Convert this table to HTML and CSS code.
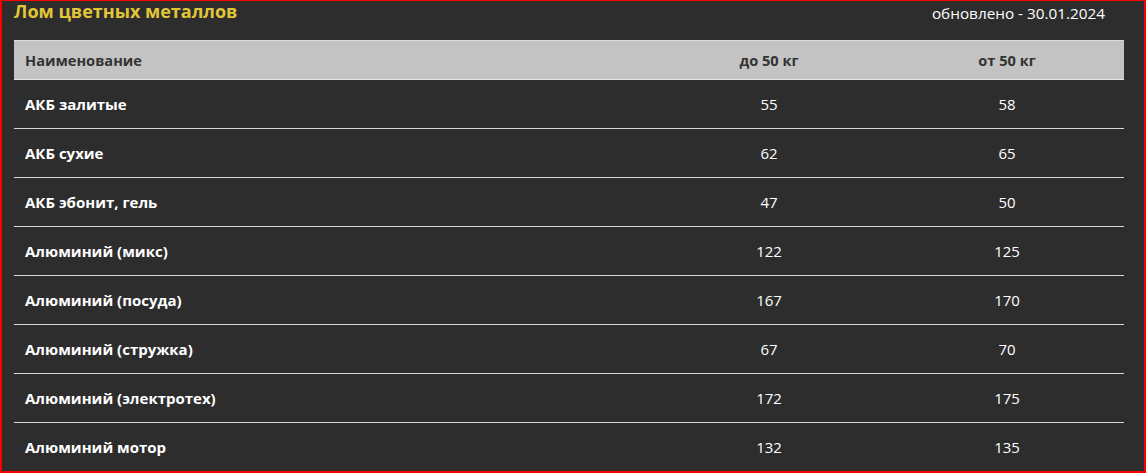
FILE: index.html
```html
<!DOCTYPE html>
<html lang="ru">
<head>
<meta charset="utf-8">
<title>Лом цветных металлов</title>
<link rel="stylesheet" href="styles.css">
</head>
<body>
<div class="frame">
  <div class="top">
    <h1 class="title">Лом цветных металлов</h1>
    <div class="updated">обновлено - 30.01.2024</div>
  </div>
  <table class="prices">
    <colgroup>
      <col class="c-name"><col class="c-a"><col class="c-b">
    </colgroup>
    <thead>
      <tr><th class="name">Наименование</th><th>до 50 кг</th><th>от 50 кг</th></tr>
    </thead>
    <tbody>
      <tr><td class="name">АКБ залитые</td><td>55</td><td>58</td></tr>
      <tr><td class="name">АКБ сухие</td><td>62</td><td>65</td></tr>
      <tr><td class="name">АКБ эбонит, гель</td><td>47</td><td>50</td></tr>
      <tr><td class="name">Алюминий (микс)</td><td>122</td><td>125</td></tr>
      <tr><td class="name">Алюминий (посуда)</td><td>167</td><td>170</td></tr>
      <tr><td class="name">Алюминий (стружка)</td><td>67</td><td>70</td></tr>
      <tr><td class="name">Алюминий (электротех)</td><td>172</td><td>175</td></tr>
      <tr><td class="name">Алюминий мотор</td><td>132</td><td>135</td></tr>
    </tbody>
  </table>
</div>
</body>
</html>
```
FILE: styles.css
```css
* { box-sizing: border-box; }
html, body { margin: 0; padding: 0; background: #2d2d2d; }
body { font-family: "Open Sans", "Noto Sans", sans-serif; }
.frame {
  width: 1146px;
  height: 473px;
  overflow: hidden;
  background: #2d2d2d;
  border-top: 1px solid #ff0000;
  border-left: 2px solid #ff0000;
  border-right: 2px solid #ff0000;
  border-bottom: 2px solid #ff0000;
  padding: 0 20px 0 12px;
}
.top {
  display: flex;
  justify-content: space-between;
  align-items: flex-start;
  height: 39px;
}
.title {
  margin: 0;
  font-size: 18px;
  font-weight: 700;
  color: #e1c637;
  line-height: 20px;
}
.updated {
  color: #ffffff;
  font-size: 15.3px;
  line-height: 20px;
  padding-top: 2px;
  margin-right: 19px;
}
.prices {
  width: 1110px;
  border-collapse: collapse;
  table-layout: fixed;
}
.c-name { width: 634px; }
.c-a { width: 242px; }
.c-b { width: 234px; }
.prices th {
  background: #c3c3c3;
  color: #333333;
  font-size: 14.6px;
  font-weight: 700;
  height: 39px;
  text-align: center;
  border-top: 1px solid #dcdcdc;
  border-bottom: 1px solid #e6e6e6;
  padding: 0 11px;
}
.prices td {
  color: #ffffff;
  font-size: 15px;
  height: 49px;
  text-align: center;
  border-bottom: 1px solid #d8d8d8;
  padding: 0 11px;
}
.prices .name { text-align: left; }
.prices td.name { font-weight: 700; }
```
